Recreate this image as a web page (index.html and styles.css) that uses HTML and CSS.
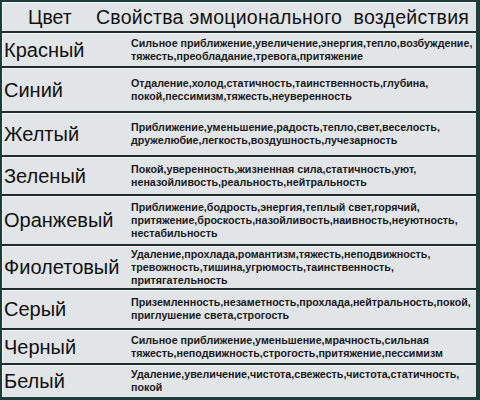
FILE: index.html
```html
<!DOCTYPE html>
<html lang="ru">
<head>
<meta charset="utf-8">
<link rel="stylesheet" href="styles.css">
</head>
<body>
<div class="frame">
  <div class="row head r0">
    <div class="name hname">Цвет</div>
    <div class="hdesc">Свойства эмоционального&nbsp; воздействия</div>
  </div>
  <div class="row r1">
    <div class="name">Красный</div>
    <div class="desc">Сильное приближение,увеличение,энергия,тепло,возбуждение,<br>тяжесть,преобладание,тревога,притяжение</div>
  </div>
  <div class="row r2">
    <div class="name">Синий</div>
    <div class="desc">Отдаление,холод,статичность,таинственность,глубина,<br>покой,пессимизм,тяжесть,неуверенность</div>
  </div>
  <div class="row r3">
    <div class="name">Желтый</div>
    <div class="desc">Приближение,уменьшение,радость,тепло,свет,веселость,<br>дружелюбие,легкость,воздушность,лучезарность</div>
  </div>
  <div class="row r4">
    <div class="name">Зеленый</div>
    <div class="desc">Покой,уверенность,жизненная сила,статичность,уют,<br>неназойливость,реальность,нейтральность</div>
  </div>
  <div class="row r5">
    <div class="name">Оранжевый</div>
    <div class="desc">Приближение,бодрость,энергия,теплый свет,горячий,<br>притяжение,броскость,назойливость,наивность,неуютность,<br>нестабильность</div>
  </div>
  <div class="row r6">
    <div class="name">Фиолетовый</div>
    <div class="desc">Удаление,прохлада,романтизм,тяжесть,неподвижность,<br>тревожность,тишина,угрюмость,таинственность,<br>притягательность</div>
  </div>
  <div class="row r7">
    <div class="name">Серый</div>
    <div class="desc">Приземленность,незаметность,прохлада,нейтральность,покой,<br>приглушение света,строгость</div>
  </div>
  <div class="row r8">
    <div class="name">Черный</div>
    <div class="desc">Сильное приближение,уменьшение,мрачность,сильная<br>тяжесть,неподвижность,строгость,притяжение,пессимизм</div>
  </div>
  <div class="row r9 last">
    <div class="name">Белый</div>
    <div class="desc">Удаление,увеличение,чистота,свежесть,чистота,статичность,<br>покой</div>
  </div>
</div>
</body>
</html>
```
FILE: styles.css
```css
html, body {
  margin: 0;
  padding: 0;
  background: #1d3c3a;
}
.frame {
  width: 474px;
  height: 395px;
  margin: 2px 4px 3px 2px;
  background: #e2e5e8;
  box-shadow: inset 1px 1px 0 #f4f6f7;
  display: flex;
  flex-direction: column;
  font-family: "Liberation Sans", Arial, sans-serif;
  color: #111;
  overflow: hidden;
}
.row {
  display: flex;
  align-items: center;
  border-bottom: 2px solid #1f2d2c;
  box-shadow: inset 0 1px 0 #f3f5f6;
  flex: none;
}
.row.last {
  border-bottom: none;
  flex: 1;
}
.row.head {
  align-items: flex-end;
  box-sizing: border-box;
  padding-bottom: 2px;
}
.name {
  width: 127px;
  flex: none;
  padding-left: 2px;
  font-size: 20px;
  line-height: 24px;
}
.hname {
  padding-left: 26px;
  width: 68px;
  font-size: 19.5px;
}
.hdesc {
  font-size: 19.5px;
  line-height: 24px;
  letter-spacing: 0.25px;
  white-space: nowrap;
}
.desc {
  font-size: 10.7px;
  line-height: 13px;
  font-weight: bold;
  color: #1a1a1a;
  white-space: nowrap;
}
.r0 { height: 31px; }
.r1 { height: 33px; }
.r2 { height: 43px; }
.r3 { height: 42px; }
.r4 { height: 37px; }
.r5 { height: 48px; }
.r6 { height: 42px; }
.r7 { height: 38px; }
.r8 { height: 33px; }
```
